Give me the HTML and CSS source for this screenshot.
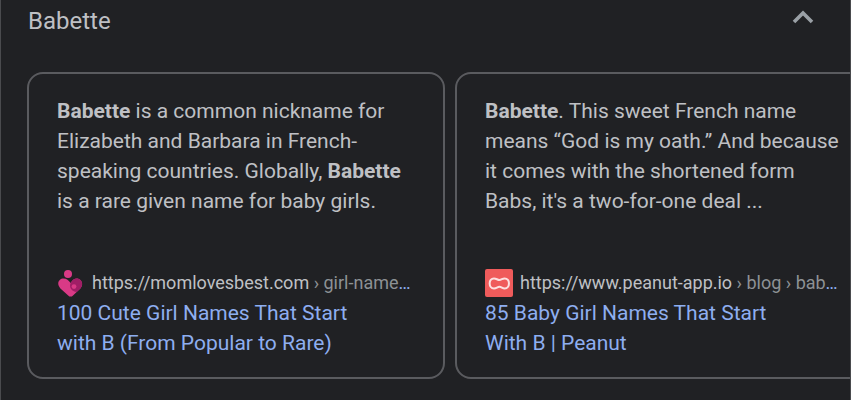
FILE: index.html
```html
<!DOCTYPE html>
<html lang="en">
	<head>
		<meta charset="utf-8">
		<meta name="viewport" content="width=device-width, initial-scale=1">
		<title>Babette</title>
		<link rel="stylesheet" href="styles.css">
	</head>
	<body>
		<section class="panel">
			<header class="panel-head">
				<h2 class="panel-title">Babette</h2>
				<button type="button" class="toggle" aria-label="Collapse" aria-expanded="true">
					<svg width="22" height="14" viewBox="0 0 22 14"><path d="M2 12 L11 3 L20 12" fill="none" stroke="#9aa0a6" stroke-width="3.6"/></svg>
				</button>
			</header>
			<div class="cards">
				<article class="card">
					<p class="snippet"><b>Babette</b> is a common nickname for Elizabeth and Barbara in French-speaking countries. Globally, <b>Babette</b> is a rare given name for baby girls.</p>
					<a class="source" href="#">
						<span class="site">
							<svg class="favicon" width="28" height="28" viewBox="0 0 28 28">
								<circle cx="11" cy="5" r="4" fill="#d93a86"/>
								<path d="M13.6 27.6 C12.6 27.6 12 27.2 11.2 26.4 L3.4 19.4 C-1 14.5 2 9.6 6.6 9.6 C9.6 9.6 11.6 11.6 13.6 14 C15.4 11 17.6 9.6 19.6 9.6 C24.6 9.6 27 15.4 23.4 19.4 L16 26.4 C15.2 27.2 14.6 27.6 13.6 27.6 Z" fill="#d93a86"/>
								<path d="M13.6 14 C15.4 11 17.6 9.6 19.6 9.6 C24.6 9.6 27 15.4 23.4 19.4 L19.6 23 C15 22.6 11.6 18.6 13.6 14 Z" fill="#a01e66"/>
								<circle cx="17" cy="17.6" r="2.4" fill="#d93a86"/>
							</svg>
							<span class="url"><span class="domain">https://momlovesbest.com</span><span class="path"> › girl-names-that-start-with-b</span></span>
						</span>
						<span class="link-title">100 Cute Girl Names That Start with B (From Popular to Rare)</span>
					</a>
				</article>
				<article class="card">
					<p class="snippet"><b>Babette</b>. This sweet French name means “God is my oath.” And because it comes with the shortened form Babs, it's a two-for-one deal ...</p>
					<a class="source" href="#">
						<span class="site">
							<svg class="favicon" width="28" height="28" viewBox="0 0 28 28">
								<rect width="28" height="28" rx="2" fill="#ef5b5b"/>
								<path d="M9 9.4 C11.4 9.4 12.4 11 14.4 11 S17.400 9.4 19.6 9.4 C25.400 9.4 25.400 19.4 19.6 19.4 C17.400 19.4 16.4 17.8 14.4 17.8 S11.4 19.4 9 19.4 C3.2 19.4 3.2 9.4 9 9.4 Z" fill="none" stroke="#fde0e0" stroke-width="2"/>
							</svg>
							<span class="url"><span class="domain">https://www.peanut-app.io</span><span class="path"> › blog › baby-girl-names</span></span>
						</span>
						<span class="link-title">85 Baby Girl Names That Start With B | Peanut</span>
					</a>
				</article>
			</div>
		</section>
	</body>
</html>
```
FILE: styles.css
```css
*{
	box-sizing: border-box;
	margin: 0;
	padding: 0;
}
body{
	background-color: #202124;
	color: #bfc0c4;
	font-family: Roboto, "Liberation Sans", sans-serif;
	font-size: 21px;
	line-height: 30px;
}
.panel{
	min-height: 100vh;
	border: 1px solid #4a4b4e;
	border-width: 0 1px;
	overflow: hidden;
}
.panel-head{
	display: flex;
	align-items: center;
	justify-content: space-between;
	height: 42px;
	padding: 0 36px 0 27px;
}
.panel-title{
	font-size: 24px;
	font-weight: 400;
}
.toggle{
	display: flex;
	padding-bottom: 8px;
	border: none;
	background: none;
	cursor: pointer;
}
.cards{
	display: flex;
	gap: 10px;
	padding: 30px 26px 20px;
}
.card{
	display: flex;
	flex-direction: column;
	flex: none;
	width: 418px;
	padding: 22px 32px 19px 28px;
	border: 2px solid #5a5b5f;
	border-radius: 16px;
}
.snippet{
	margin-bottom: 52px;
}
.source{
	margin-top: auto;
	color: #8eaef0;
	text-decoration: none;
}
.site{
	display: flex;
	align-items: center;
	gap: 7px;
	height: 30px;
}
.favicon{
	flex: none;
}
.url{
	min-width: 0;
	overflow: hidden;
	white-space: nowrap;
	text-overflow: ellipsis;
	font-size: 18px;
}
.domain{
	color: #bfc0c4;
}
.path{
	color: #8d9195;
}
.link-title{
	display: block;
	padding-right: 50px;
}
```
